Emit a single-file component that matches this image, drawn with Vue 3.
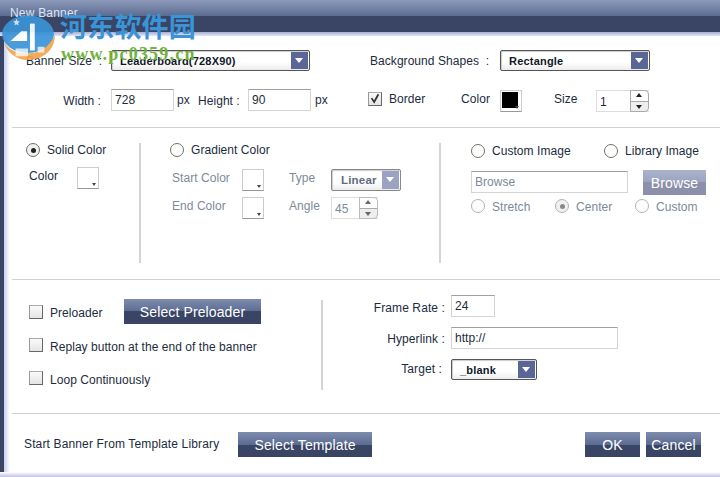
<script setup>
</script>

<template>
  <div class="dialog">
    <header class="titlebar">New Banner</header>
    <div class="sheen"></div>
    <div class="frame">
      <main class="content">
        <section class="sec sec1">
          <div class="row first">
            <span class="w85">Banner Size&nbsp; :</span>
            <div class="select w199"><b>Leaderboard(728X90)</b><i class="drop"></i></div>
            <span class="w130 ml60">Background Shapes&nbsp; :</span>
            <div class="select w150"><b>Rectangle</b><i class="drop"></i></div>
          </div>
          <div class="row mt18">
            <span class="w75 right mr10 dn2">Width :</span>
            <div class="input w63">728</div>
            <span class="px1">px</span>
            <span class="w50 dn2">Height :</span>
            <div class="input w63">90</div>
            <span class="px2">px</span>
            <span class="check on up3"><svg viewBox="0 0 14 14"><path d="M3 6 6 10.5 11 1.5" fill="none" stroke="#333" stroke-width="2"/></svg></span>
            <span class="w72 ml7 up2">Border</span>
            <span class="w39 up2">Color</span>
            <span class="swatch black"><i></i></span>
            <span class="ml32 w42 up2">Size</span>
            <div class="spin w53"><span class="val">1</span><span class="arrows"><i class="up"></i><i class="down"></i></span></div>
          </div>
        </section>

        <section class="sec sec2">
          <div class="col c1">
            <div class="radios"><span class="radio sel"></span><span>Solid Color</span></div>
            <div class="row mt10">
              <span class="w48 ml3">Color</span>
              <span class="swatch"><i></i></span>
            </div>
          </div>
          <div class="vline tall"></div>
          <div class="col c2">
            <div class="radios"><span class="radio"></span><span>Gradient Color</span></div>
            <div class="row mt12 muted">
              <span class="ml2 w70">Start Color</span>
              <span class="swatch"><i></i></span>
              <span class="ml25 w42">Type</span>
              <div class="select dim w70"><b>Linear</b><i class="drop"></i></div>
            </div>
            <div class="row mt6 muted">
              <span class="ml2 w70">End Color</span>
              <span class="swatch"><i></i></span>
              <span class="ml25 w42">Angle</span>
              <div class="spin dimspin w47"><span class="val">45</span><span class="arrows"><i class="up"></i><i class="down"></i></span></div>
            </div>
          </div>
          <div class="vline tall"></div>
          <div class="col c3">
            <div class="radios r3">
              <span class="radio"></span><span class="w112">Custom Image</span>
              <span class="radio"></span><span>Library Image</span>
            </div>
            <div class="browse">
              <div class="input w157 muted">Browse</div>
              <button class="btn off">Browse</button>
            </div>
            <div class="radios r4 muted">
              <span class="radio soft"></span><span class="w63">Stretch</span>
              <span class="radio soft sel"></span><span class="w59">Center</span>
              <span class="radio soft"></span><span>Custom</span>
            </div>
          </div>
        </section>

        <section class="sec sec3">
          <div class="col c4">
            <div class="opt h25">
              <span class="check"></span><span class="w74">Preloader</span>
              <button class="btn w137">Select Preloader</button>
            </div>
            <div class="opt mt14"><span class="check"></span><span class="low">Replay button at the end of the banner</span></div>
            <div class="opt mt19"><span class="check"></span><span class="low">Loop Continuously</span></div>
          </div>
          <div class="vline short"></div>
          <div class="col c5">
            <div class="row"><span class="lab l1">Frame Rate :</span><div class="input w44">24</div></div>
            <div class="row mt10"><span class="lab l2">Hyperlink :</span><div class="input w167">http://</div></div>
            <div class="row mt9"><span class="lab l3">Target :</span><div class="select w86"><b>_blank</b><i class="drop"></i></div></div>
          </div>
        </section>

        <section class="sec sec4">
          <span class="w214 start">Start Banner From Template Library</span>
          <button class="btn w134">Select Template</button>
          <button class="btn w55 auto">OK</button>
          <button class="btn w55 ml6">Cancel</button>
        </section>
      </main>
    </div>
    <div class="bottom"></div>

    <div class="watermark">
      <svg class="logo" viewBox="0 0 58 50">
        <ellipse cx="28" cy="21" rx="27" ry="19.500" fill="#3a94d6"/>
        <path d="M3 30C10 40 20 41 28 41 40 41 50 35 56 22 56 38 43 48 28 48 16 48 7 41 3 30Z" fill="#f0a44e"/>
        <path d="M15 36h13v8H15ZM38 34h7v6h-7Z" fill="#fff" opacity=".75"/>
        <path d="M9 29 21 18h6v10H9Z" fill="#fff"/>
        <path d="M30 10h5v28h-5Z" fill="#fff"/>
        <path d="M16 5l1 2.400 2.500.3-1.900 1.700.5 2.600-2.100-1.300-2.100 1.300.5-2.600-1.900-1.700 2.500-.3Z" fill="#d8ecfa"/>
      </svg>
      <div class="wm-cn">河东软件园</div>
      <div class="wm-url">www.pc0359.cn</div>
    </div>
  </div>
</template>

<style>
html, body { margin: 0; background: #fff; }
</style>

<style scoped>
.dialog {
  position: relative;
  width: 720px;
  height: 477px;
  overflow: hidden;
  display: flex;
  flex-direction: column;
  background: #fff;
  font: 12px "Liberation Sans", Arial, sans-serif;
  letter-spacing: .05px;
  color: #1c2b40;
}
.titlebar {
  box-sizing: border-box;
  height: 32px;
  padding: 6px 0 0 10px;
  color: #dfe6f2;
  letter-spacing: .2px;
  background: linear-gradient(to bottom, #8d9abb 0, #5b6c92 16px, #3a4565 16px, #3a4565 32px);
}
.sheen { height: 4px; background: linear-gradient(#a8aed0, #e4e6f6); flex: none; }
.frame {
  flex: 1;
  display: flex;
  min-height: 0;
  border-left: 4px solid #3a4565;
  background: linear-gradient(to right, #c8cdf0, #fff 6px);
}
.content { flex: 1; margin-left: 8px; display: flex; flex-direction: column; }
.bottom { height: 5px; flex: none; background: linear-gradient(#fff 0, #d8daf0 60%, #c0c4e4); }

.sec { flex: none; box-sizing: border-box; }
.sec1 { height: 91px; padding: 14px 0 0 14px; }
.sec2 { height: 153px; border-top: 1px solid #cdd3d0; border-bottom: 1px solid #cdd3d0; display: flex; padding-top: 15px; }
.sec3 { height: 133px; display: flex; }
.sec4 { height: 59px; border-top: 1px solid #c8d2ce; padding: 18px 19px 0 12px; display: flex; align-items: flex-start; }

.row { display: flex; align-items: center; height: 22px; }
.row.first { height: 21px; }
.right { text-align: right; }
.col { flex: none; }
.c1 { width: 127px; padding-left: 14px; box-sizing: border-box; }
.c2 { width: 298px; padding-left: 29px; box-sizing: border-box; }
.c3 { padding-left: 30px; margin-top: 1px; }
.c4 { width: 309px; padding: 19px 0 0 17px; box-sizing: border-box; }
.c5 { padding-top: 15px; margin-left: -1px; }
.vline { width: 2px; flex: none; background: #d4d4d4; }
.tall { height: 120px; }
.short { height: 90px; margin: 20px 0 0; }
.muted { color: #7c8a9a; }
.sec2 .row > span:not(.swatch) { margin-top: -4px; }
.up2 { margin-top: -2px; }
.up3 { margin-top: -3px; }
.dn2 { margin-top: 2px; }
.low { margin-top: 3px; }
.start { margin-top: 5px; letter-spacing: .14px; }

.radios { display: flex; align-items: center; height: 14px; gap: 7px; }
.r3 { gap: 0; }
.r3 .radio + span { margin-left: 7px; }
.r4 { gap: 0; margin-top: 4px; }
.r4 .radio + span { margin: 2px 0 0 7px; }
.radio {
  flex: none;
  box-sizing: border-box;
  width: 14px;
  height: 14px;
  border-radius: 50%;
  border: 1px solid #6a7560;
  background: #fff;
  display: flex;
  align-items: center;
  justify-content: center;
}
.radio.soft { border-color: #b0b8a8; }
.radio.sel { background: #f0f0f0; }
.radio.sel::after { content: ""; width: 5px; height: 5px; border-radius: 50%; background: #222; }
.radio.soft.sel::after { background: #888; }

.check {
  flex: none;
  box-sizing: border-box;
  width: 14px;
  height: 14px;
  border: 1px solid #666;
  border-top-color: #aaa;
  border-left-color: #999;
  background: linear-gradient(#fafafa, #e4e4e4);
  display: block;
}
.check svg { display: block; width: 12px; height: 12px; }

.input {
  box-sizing: border-box;
  height: 22px;
  line-height: 20px;
  padding-left: 3px;
  border: 1px solid #d4d4d4;
  border-top-color: #a0a0a0;
  background: #fff;
  color: #1c2b40;
}
.input.muted { color: #7c8a9a; }

.select {
  position: relative;
  box-sizing: border-box;
  height: 21px;
  border: 1px solid #555;
  border-radius: 2px;
  background: linear-gradient(#fff 60%, #ececec);
  box-shadow: inset 1px 1px 1px #ccc;
  line-height: 21px;
  padding-left: 8px;
  font-size: 11px;
  color: #101828;
  letter-spacing: .2px;
}
.select b { font-weight: bold; }
.drop {
  position: absolute;
  right: 1px;
  top: 1px;
  bottom: 1px;
  width: 17px;
  background: #5a6796;
}
.drop::after {
  content: "";
  position: absolute;
  left: 4px;
  top: 6px;
  border: 4.5px solid transparent;
  border-top: 5px solid #fff;
  border-bottom: 0;
}
.select.dim { height: 22px; border-color: #888; color: #5e6b80; padding-left: 9px; line-height: 21px; font-size: 11.5px; }
.select.dim .drop { background: #9aa4c2; }

.swatch {
  position: relative;
  flex: none;
  box-sizing: border-box;
  width: 22px;
  height: 22px;
  border: 1px solid #ccc;
  border-bottom-color: #999;
  background: #fff;
}
.swatch i {
  position: absolute;
  right: 2px;
  bottom: 2px;
  border: 2.5px solid transparent;
  border-top: 3px solid #444;
  border-bottom: 0;
}
.swatch.black { margin-top: 2px; }
.swatch.black::before { content: ""; position: absolute; inset: 1px 3px 3px 1px; background: #000; }

.spin {
  box-sizing: border-box;
  display: flex;
  height: 22px;
  border: 1px solid #ddd;
  border-right: 0;
  background: #fff;
}
.sec1 .spin { margin-top: 2px; }
.val { flex: 1; line-height: 22px; padding-left: 3px; }
.arrows {
  flex: none;
  width: 19px;
  margin: -1px 0;
  box-sizing: border-box;
  border: 1px solid #aaa;
  border-radius: 0 4px 4px 0;
  background: linear-gradient(#fff 50%, #eee 50%);
  display: flex;
  flex-direction: column;
  position: relative;
}
.arrows i { flex: 1; position: relative; }
.arrows .up { border-bottom: 1px solid #aaa; }
.arrows .up::after, .arrows .down::after {
  content: "";
  position: absolute;
  left: 5px;
  border: 3.5px solid transparent;
}
.arrows .up::after { top: 2px; border-top: 0; border-bottom: 4px solid #222; }
.arrows .down::after { top: 3px; border-bottom: 0; border-top: 4px solid #222; }
.dimspin { color: #7c8a9a; }
.dimspin .arrows { border-color: #bbb; }
.dimspin .arrows .up::after { border-bottom-color: #666; }
.dimspin .arrows .down::after { border-top-color: #666; }

.btn {
  flex: none;
  height: 25px;
  padding: 0;
  border: 0;
  color: #fff;
  letter-spacing: .12px;
  font-family: "Liberation Sans", Arial, sans-serif;
  font-size: 14px;
  background: linear-gradient(to bottom, #7e8cae 0, #5c6c92 50%, #3a4565 50%, #3a4565 100%);
}
.btn.off { width: 63px; margin: -1px 0 0 15px; background: linear-gradient(to bottom, #aab3cb 0, #9ba4bf 50%, #8c90aa 50%, #8c90aa 100%); }
.browse { display: flex; align-items: flex-start; height: 24px; margin-top: 13px; }

.opt { display: flex; align-items: center; height: 14px; gap: 7px; }
.opt.h25 { height: 25px; gap: 0; }
.opt.h25 .w74 { margin: 2px 0 0 7px; }

.lab { text-align: right; letter-spacing: .1px; }
.l1 { width: 123px; margin: 4px 6px 0 0; }
.l2 { width: 123px; margin: 2px 6px 0 0; }
.l3 { width: 120px; margin-right: 9px; }

.mt6 { margin-top: 6px; }
.mt9 { margin-top: 9px; }
.mt10 { margin-top: 10px; }
.mt12 { margin-top: 12px; }
.mt14 { margin-top: 14px; }
.mt18 { margin-top: 18px; }
.mt19 { margin-top: 19px; }
.ml2 { margin-left: 2px; }
.ml3 { margin-left: 3px; }
.ml6 { margin-left: 6px; }
.ml7 { margin-left: 7px; }
.ml25 { margin-left: 25px; }
.ml32 { margin-left: 32px; }
.ml60 { margin-left: 60px; }
.mr10 { margin-right: 10px; }
.auto { margin-left: auto; }
.w39 { width: 39px; }
.w42 { width: 42px; flex: none; }
.w44 { width: 44px; }
.w47 { width: 47px; }
.w48 { width: 48px; }
.w50 { width: 50px; }
.w53 { width: 53px; }
.w55 { width: 55px; }
.w59 { width: 59px; }
.w63 { width: 63px; }
.w70 { width: 70px; flex: none; }
.w72 { width: 72px; }
.w74 { width: 74px; }
.w75 { width: 75px; }
.w85 { width: 85px; }
.w86 { width: 86px; }
.w112 { width: 112px; }
.w130 { width: 130px; }
.w134 { width: 134px; }
.w137 { width: 137px; }
.w150 { width: 150px; }
.w157 { width: 157px; }
.w167 { width: 167px; }
.w199 { width: 199px; }
.w214 { width: 214px; }
.px1 { margin-left: 3px; width: 21px; }
.px2 { margin-left: 4px; width: 53px; }

.watermark { position: absolute; left: 0; top: 0; width: 210px; height: 70px; pointer-events: none; }
.logo { position: absolute; left: 1px; top: 14px; width: 56px; height: 48px; opacity: .92; }
.wm-cn {
  position: absolute;
  left: 60px;
  top: 9px;
  font: bold 27px "Noto Sans CJK SC", sans-serif;
  line-height: 34px;
  color: #3a94d6;
  letter-spacing: .2px;
  white-space: nowrap;
}
.wm-url {
  position: absolute;
  left: 61px;
  top: 44px;
  font: bold 18px "Liberation Serif", serif;
  letter-spacing: 1.2px;
  color: #6fb23c;
  white-space: nowrap;
}
</style>
